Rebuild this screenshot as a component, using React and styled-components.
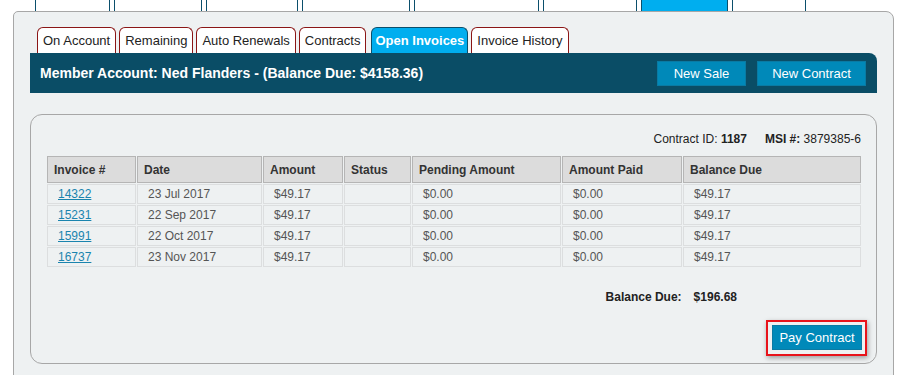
import React from 'react';
import styled, { createGlobalStyle } from 'styled-components';

const GlobalStyle = createGlobalStyle`
  * { box-sizing: border-box; }
  body {
    margin: 0;
    background: #fff;
    font-family: "Liberation Sans", Arial, sans-serif;
    color: #222;
  }
`;

const Page = styled.div`
  width: 897px;
  height: 375px;
  overflow: hidden;
`;

const TopNav = styled.div`
  display: flex;
  gap: 4px;
  height: 11px;
  padding-left: 35px;
`;

const NavTab = styled.div`
  width: ${p => p.w}px;
  border-left: 1px solid #0b4f6c;
  border-right: 1px solid #0b4f6c;
  background: ${p => (p.active ? '#00aeef' : '#fff')};
`;

const Panel = styled.div`
  margin-left: 13px;
  width: 881px;
  height: 400px;
  border: 1px solid #a7a7a7;
  border-radius: 5px 8px 0 0;
  background: #eef1f2;
  padding: 15px 16px 0 16px;
`;

const TabRow = styled.div`
  display: flex;
  gap: 3px;
  padding-left: 7px;
`;

const Tab = styled.div`
  height: 26px;
  line-height: 25px;
  padding: ${p => (p.active ? '0 3px' : '0 5px')};
  font-size: 13px;
  border: 1px solid ${p => (p.active ? '#0b4f6c' : '#8b1616')};
  border-bottom: none;
  border-radius: 6px 6px 0 0;
  background: ${p => (p.active ? '#00aeef' : '#fff')};
  color: ${p => (p.active ? '#fff' : '#222')};
  font-weight: ${p => (p.active ? 'bold' : 'normal')};
  margin-left: ${p => (p.active ? '2px' : '0')};
`;

const HeaderBar = styled.div`
  display: flex;
  align-items: center;
  height: 40px;
  padding: 0 11px 0 10px;
  background: #0a4d66;
  border-radius: 0 8px 0 0;
`;

const Title = styled.div`
  flex: 1;
  color: #fff;
  font-weight: bold;
  font-size: 14px;
`;

const HeaderButtons = styled.div`
  display: flex;
  gap: 11px;
`;

const BlueButton = styled.button`
  width: ${p => p.w}px;
  height: 25px;
  border: 1px solid #0a7aa3;
  background: #0089b9;
  color: #fff;
  font-family: "Liberation Sans", Arial, sans-serif;
  font-size: 13px;
  padding: 0;
  cursor: pointer;
`;

const Card = styled.div`
  margin-top: 21px;
  height: 250px;
  border: 1px solid #a7a7a7;
  border-radius: 12px;
  padding: 0 15px 0 16px;
  display: flex;
  flex-direction: column;
`;

const MetaLine = styled.div`
  display: flex;
  justify-content: flex-end;
  gap: 18px;
  margin-top: 17px;
  font-size: 12px;
  color: #222;
  b { font-weight: bold; }
`;

const Table = styled.table`
  margin-top: 9px;
  width: 816px;
  border-collapse: separate;
  border-spacing: 1px;
  margin-left: -1px;
  font-size: 12px;
  table-layout: fixed;
`;

const Th = styled.th`
  width: ${p => (p.w ? `${p.w}px` : 'auto')};
  height: 27px;
  text-align: left;
  padding: 0 0 0 6px;
  background: #dcdcdc;
  border: 1px solid #b5b5b5;
  color: #333;
  font-weight: bold;
`;

const Td = styled.td`
  height: 20px;
  padding: 0 0 0 10px;
  border: 1px solid #dcdedf;
  color: #555;
`;

const InvoiceLink = styled.a`
  color: #1a84ae;
  text-decoration: underline;
`;

const TotalRow = styled.div`
  display: flex;
  justify-content: flex-end;
  gap: 12px;
  margin-top: 22px;
  padding-right: 124px;
  font-size: 12px;
  font-weight: bold;
  color: #222;
`;

const ActionRow = styled.div`
  display: flex;
  justify-content: flex-end;
  margin-top: 16px;
  margin-right: -6px;
`;

const Highlight = styled.div`
  border: 2px solid #e8131b;
  padding: 3px 3px 4px 4px;
  box-shadow: 1px 2px 5px rgba(0, 0, 0, 0.35);
`;

const navTabs = [75, 88, 92, 108, 125, 94, 87, 74];
const tabs = ['On Account', 'Remaining', 'Auto Renewals', 'Contracts', 'Open Invoices', 'Invoice History'];
const columns = [
  { label: 'Invoice #', w: 89 },
  { label: 'Date', w: 125 },
  { label: 'Amount', w: 80 },
  { label: 'Status', w: 67 },
  { label: 'Pending Amount', w: 149 },
  { label: 'Amount Paid', w: 120 },
  { label: 'Balance Due' },
];
const invoices = [
  ['14322', '23 Jul 2017'],
  ['15231', '22 Sep 2017'],
  ['15991', '22 Oct 2017'],
  ['16737', '23 Nov 2017'],
];

const App = () => (
  <Page>
    <GlobalStyle />
    <TopNav>
      {navTabs.map((w, i) => (
        <NavTab key={i} w={w} active={i === 6} />
      ))}
    </TopNav>
    <Panel>
      <TabRow>
        {tabs.map(t => (
          <Tab key={t} active={t === 'Open Invoices'}>{t}</Tab>
        ))}
      </TabRow>
      <HeaderBar>
        <Title>Member Account: Ned Flanders - (Balance Due: $4158.36)</Title>
        <HeaderButtons>
          <BlueButton w={89}>New Sale</BlueButton>
          <BlueButton w={109}>New Contract</BlueButton>
        </HeaderButtons>
      </HeaderBar>
      <Card>
        <MetaLine>
          <span>Contract ID: <b>1187</b></span>
          <span><b>MSI #:</b> 3879385-6</span>
        </MetaLine>
        <Table>
          <thead>
            <tr>
              {columns.map(c => (
                <Th key={c.label} w={c.w}>{c.label}</Th>
              ))}
            </tr>
          </thead>
          <tbody>
            {invoices.map(([num, date]) => (
              <tr key={num}>
                <Td><InvoiceLink href="#">{num}</InvoiceLink></Td>
                <Td>{date}</Td>
                <Td>$49.17</Td>
                <Td></Td>
                <Td>$0.00</Td>
                <Td>$0.00</Td>
                <Td>$49.17</Td>
              </tr>
            ))}
          </tbody>
        </Table>
        <TotalRow>
          <span>Balance Due:</span>
          <span>$196.68</span>
        </TotalRow>
        <ActionRow>
          <Highlight>
            <BlueButton w={90}>Pay Contract</BlueButton>
          </Highlight>
        </ActionRow>
      </Card>
    </Panel>
  </Page>
);

export default App;
